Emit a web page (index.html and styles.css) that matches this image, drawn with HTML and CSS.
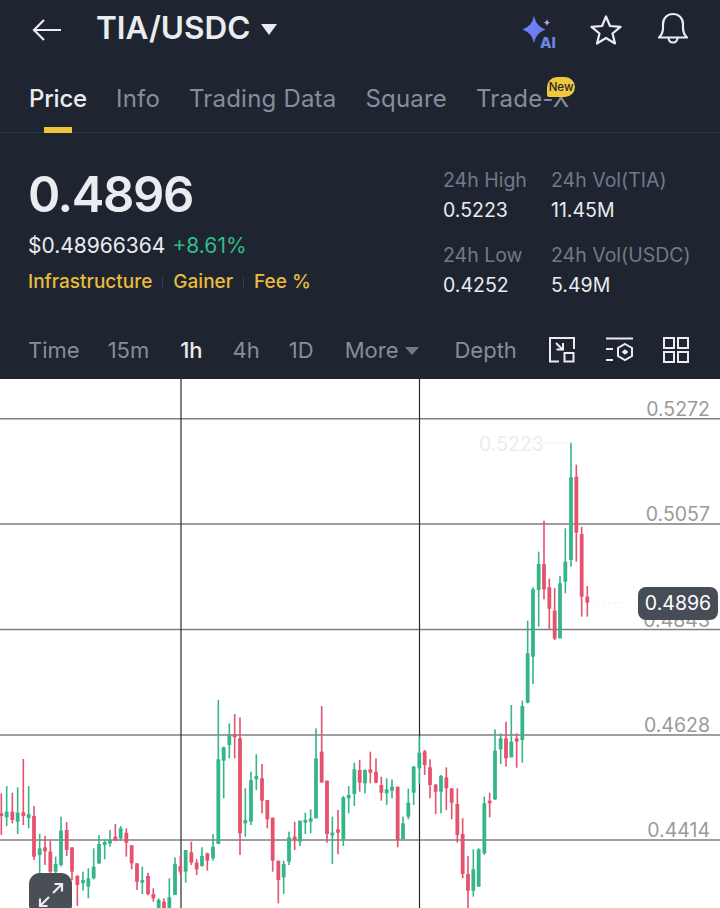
FILE: index.html
```html
<!DOCTYPE html>
<html lang="en">
<head>
<meta charset="utf-8">
<title>TIA/USDC</title>
<link rel="stylesheet" href="styles.css">
</head>
<body>
<div class="page">
  <section class="dark">
    <header class="topbar">
      <svg class="back" width="30" height="24" viewBox="0 0 30 24"><path d="M29 12H2M12 2 2 12l10 10" fill="none" stroke="#eaecef" stroke-width="2.2"/></svg>
      <h1 class="pair">TIA/USDC</h1>
      <span class="caret-big"></span>
      <div class="top-icons">
        <span class="ai">
          <svg width="34" height="34" viewBox="0 0 34 34">
            <defs><linearGradient id="aig" x1="0" y1="0" x2="1" y2="1"><stop offset="0" stop-color="#5f8ff7"/><stop offset="1" stop-color="#7a6cf0"/></linearGradient></defs>
            <path d="M12 2.500 C13.500 9.500 16 13.500 23.500 16.500 C16 19.500 13.500 23.500 12 30.500 C10.500 23.500 8 19.500 0.500 16.500 C8 13.500 10.500 9.500 12 2.500Z" fill="url(#aig)"/>
            <path d="M25 6c.4 2.200 1.300 3.200 3.500 3.600-2.200.5-3.100 1.500-3.500 3.700-.5-2.200-1.400-3.200-3.500-3.700 2.100-.4 3-1.400 3.500-3.600Z" fill="#c79be8"/>
          </svg>
          <span class="ai-text">AI</span>
        </span>
        <svg class="star" width="34" height="34" viewBox="0 0 34 34"><path d="M17 3.500 21 13l10.500.8-8 6.700 2.500 10L17 25l-9 5.500 2.500-10-8-6.700L13 13Z" fill="none" stroke="#eaecef" stroke-width="2.200" stroke-linejoin="round"/></svg>
        <svg class="bell" width="34" height="36" viewBox="0 0 34 36"><path d="M3 26.500c3-3 4-5 4-9.500V13C7 7 11.500 3 17 3s10 4 10 10v4c0 4.500 1 6.500 4 9.500Z" fill="none" stroke="#eaecef" stroke-width="2.200" stroke-linejoin="round"/><path d="M12.500 27c0 6 9 6 9 0" fill="none" stroke="#eaecef" stroke-width="2.200"/></svg>
      </div>
    </header>

    <nav class="tabs">
      <span class="tab tab-on">Price</span>
      <span class="tab">Info</span>
      <span class="tab">Trading Data</span>
      <span class="tab">Square</span>
      <span class="tab tab-new">Trade-X<span class="new">New</span></span>
    </nav>

    <section class="stats">
      <div class="quote">
        <div class="last">0.4896</div>
        <div class="fiat"><span>$0.48966364</span><span class="up">+8.61%</span></div>
        <div class="tags"><span>Infrastructure</span><i></i><span>Gainer</span><i></i><span>Fee %</span></div>
      </div>
      <div class="figures">
        <div class="fig"><span class="lab">24h High</span><span class="val">0.5223</span></div>
        <div class="fig"><span class="lab">24h Vol(TIA)</span><span class="val">11.45M</span></div>
        <div class="fig"><span class="lab">24h Low</span><span class="val">0.4252</span></div>
        <div class="fig"><span class="lab">24h Vol(USDC)</span><span class="val">5.49M</span></div>
      </div>
    </section>

    <div class="intervals">
      <span class="iv iv-time">Time</span>
      <span class="iv iv-15">15m</span>
      <span class="iv iv-on iv-1h">1h</span>
      <span class="iv iv-4h">4h</span>
      <span class="iv iv-1d">1D</span>
      <span class="iv iv-more">More<b class="caret-small"></b></span>
      <span class="iv iv-depth">Depth</span>
      <div class="tools">
        <svg width="28" height="28" viewBox="0 0 28 28" fill="none" stroke="#eaecef" stroke-width="2"><path d="M11 25.500H2V2h24v11"/><path d="M8 7l7 7M8.500 13.500H15V7"/><rect x="16.500" y="17" width="9" height="8.500"/></svg>
        <svg width="30" height="28" viewBox="0 0 30 28" fill="none" stroke="#eaecef" stroke-width="2"><path d="M2 2.500h27M2 13h7M2 24h7"/><path d="M21 8l7 4v8l-7 4-7-4v-8Z"/><path d="M21 14.500l1.800 1.500-1.800 1.500-1.800-1.500Z" fill="#eaecef"/></svg>
        <svg width="28" height="28" viewBox="0 0 28 28" fill="none" stroke="#eaecef" stroke-width="2"><rect x="2" y="2" width="10" height="10"/><rect x="16" y="2" width="10" height="10"/><rect x="2" y="16" width="10" height="10"/><rect x="16" y="16" width="10" height="10"/></svg>
      </div>
    </div>
  </section>

  <section class="chart">
    <svg id="plot" class="plot" width="720" height="529" viewBox="0 379 720 529">
      <g class="grid-h">
        <line x1="0" x2="720" y1="418.700" y2="418.700"/>
        <line x1="0" x2="720" y1="524" y2="524"/>
        <line x1="0" x2="720" y1="629.500" y2="629.500"/>
        <line x1="0" x2="720" y1="735" y2="735"/>
        <line x1="0" x2="720" y1="840" y2="840"/>
      </g>
      <g class="grid-v">
        <line x1="181" x2="181" y1="379" y2="908"/>
        <line x1="419.500" x2="419.500" y1="379" y2="908"/>
      </g>
      <g id="candles"></g>
      <line class="hi-line" x1="543" x2="571" y1="443" y2="443"/>
      <line class="px-line" x1="596" x2="626" y1="603" y2="603"/>
      <text class="hi-label" x="479" y="451">0.5223</text>
      <g class="axis">
        <text x="710" y="416">0.5272</text>
        <text x="710" y="521">0.5057</text>
        <text x="710" y="627">0.4843</text>
        <text x="710" y="732">0.4628</text>
        <text x="710" y="837">0.4414</text>
      </g>
    </svg>
    <div class="now">0.4896</div>
    <button class="expand" type="button">
      <svg width="28" height="28" viewBox="0 0 28 28" fill="none" stroke="#eaecef" stroke-width="2.200"><path d="M16 12 25 3M17.500 3H25v7.500M12 16l-9 9M3 17.500V25h7.500"/></svg>
    </button>
  </section>
</div>
<script src="script.js"></script>
</body>
</html>
```

FILE: styles.css
```css
* { box-sizing: border-box; }
html, body { margin: 0; padding: 0; background: #fff; }
body { font-family: Inter, "Noto Sans", sans-serif; }
.page { width: 720px; height: 908px; overflow: hidden; display: flex; flex-direction: column; }

.dark { background: #1e2530; height: 379px; flex: none; display: flex; flex-direction: column; }

.topbar { height: 60px; display: flex; align-items: center; padding: 0 30px 4px 32px; flex: none; }
.back { flex: none; margin-top: 4px; }
.pair { margin: 0 0 0 34px; font-size: 31.500px; line-height: 36px; font-weight: 600; color: #eaecef; letter-spacing: 0; }
.caret-big { width: 0; height: 0; margin: 2px 0 0 11px; border-left: 8px solid transparent; border-right: 8px solid transparent; border-top: 11px solid #eaecef; }
.top-icons { margin-left: auto; display: flex; align-items: center; gap: 33px; }
.ai { position: relative; width: 34px; height: 34px; display: block; margin-top: 4px; }
.ai-text { position: absolute; left: 18px; bottom: -3px; font-size: 15px; line-height: 14px; font-weight: 800; color: #6f86e8; }
.star { margin-top: 3px; margin-right: 0; }
.bell { margin-top: 2px; }

.tabs { height: 73px; display: flex; align-items: flex-start; gap: 29px; padding: 21px 0 0 29px; border-bottom: 1px solid #2b3340; flex: none; }
.tab { position: relative; font-size: 24px; line-height: 36px; font-weight: 400; color: #848e9c; letter-spacing: 0.200px; }
.tab-on { color: #eaecef; font-weight: 500; letter-spacing: -0.200px; }
.tab-on::after { content: ""; position: absolute; left: 15px; top: 46px; width: 28px; height: 6px; background: #f0c63c; }
.new { position: absolute; left: 71px; top: -4px; width: 28px; height: 20px; border-radius: 10px 10px 10px 2px; background: #f0c63c; color: #1f2630; font-size: 11.500px; line-height: 20px; font-weight: 500; text-align: center; letter-spacing: 0; }

.stats { display: flex; justify-content: space-between; padding: 33px 0 0 28px; flex: none; height: 190px; }
.last { font-size: 49px; line-height: 58px; font-weight: 600; color: #eaecef; letter-spacing: -1.400px; }
.fiat { display: flex; gap: 7px; margin-top: 9px; font-size: 21px; line-height: 26px; color: #eaecef; }
.up { color: #2ebd85; }
.tags { display: flex; align-items: center; margin-top: 11px; font-size: 19px; line-height: 24px; font-weight: 500; color: #e8bc3c; }
.tags i { width: 1px; height: 10px; background: #3a4350; margin: 0 10px; }

.figures { display: grid; grid-template-columns: 108px 169px; grid-auto-rows: 75px; margin-top: 3px; }
.fig { display: flex; flex-direction: column; gap: 6px; margin-top: -1px; }
.lab { font-size: 19.500px; line-height: 24px; color: #707a8a; }
.val { font-size: 19.500px; line-height: 24px; color: #eaecef; }

.intervals { flex: 1; display: flex; align-items: center; padding: 0 30px 2px 28px; font-size: 22px; color: #848e9c; }
.iv { line-height: 28px; white-space: nowrap; }
.iv-on { color: #eaecef; font-weight: 500; }
.iv-15 { margin-left: 28px; }
.iv-1h { margin-left: 31px; }
.iv-4h { margin-left: 30px; }
.iv-1d { margin-left: 29px; }
.iv-more { margin-left: 31px; display: flex; align-items: center; }
.iv-depth { margin-left: 35px; }
.caret-small { width: 0; height: 0; margin: 2px 0 0 7px; border-left: 7px solid transparent; border-right: 7px solid transparent; border-top: 8px solid #707a8a; }
.tools { margin-left: auto; display: flex; align-items: center; gap: 28px; }

.chart { position: relative; flex: 1; background: #fff; overflow: hidden; }
.plot { display: block; }
.grid-h line { stroke: #7f7f7f; stroke-width: 1.600; }
.grid-v line { stroke: #2a2a2a; stroke-width: 1.200; }
.hi-line { stroke: #efefef; stroke-width: 1; }
.px-line { stroke: #efefef; stroke-width: 1; stroke-dasharray: 3 3; }
.hi-label { font-size: 19.500px; fill: #ececec; }
.axis text { font-size: 19.500px; fill: #9a9a9a; text-anchor: end; }
.now { position: absolute; left: 638px; top: 208px; width: 80px; height: 33px; border-radius: 8px; background: #474d57; color: #fff; font-size: 19.500px; line-height: 33px; text-align: center; }
.expand { position: absolute; left: 29px; top: 494px; width: 43px; height: 43px; padding: 0; border: 0; border-radius: 11px; background: #4a4f57; display: flex; align-items: center; justify-content: center; }
```

FILE: script.js
```js
// Each candle: colour, wick top, wick bottom, body top, body bottom, in the sampled units of its block.
var blocks = [
  { ox: 0, oy: 690, s: [
    ['r',4,310,435,370,378],['g',20,288,408,365,382],['r',37,308,400,365,390],['g',53,292,432,368,395],
    ['r',70,207,405,367,378],['g',86,288,415,372,384],['r',102,348,510,378,500],['g',119,432,550,475,495],
    ['r',135,438,525,472,484],['r',151,452,580,485,545],['g',167,500,560,522,545],['g',183,380,530,422,525],
    ['r',200,396,498,420,480],['r',216,472,570,472,545],['r',232,555,648,558,585],['g',249,545,602,570,580],
    ['g',265,535,625,565,590],['g',281,475,568,530,565],['g',297,435,522,462,520],['g',314,448,508,456,465],
    ['g',330,420,470,450,460],['r',346,402,452,440,452],['g',362,408,452,415,445],['r',379,415,500,428,458],
    ['r',395,465,538,466,520],['r',411,520,600,520,575],['g',427,530,612,570,578],['r',444,548,616,558,612],
    ['r',460,595,635,612,625],['g',476,625,660,630,660],['r',492,625,660,635,660],['g',508,565,660,622,660],
    ['g',525,502,615,522,615],['r',541,498,552,528,545],['g',557,480,578,480,545],['r',574,455,525,487,518],
    ['r',590,508,555,518,538],['g',606,472,530,498,528],['r',622,488,542,490,512],['g',639,432,512,470,505],
    ['g',655,30,462,208,462],['g',671,170,325,172,212],['g',688,100,205,135,165],['r',704,72,205,132,142]
  ]},
  { ox: 240, oy: 690, s: [
    ['r',0,82,495,145,430],['g',16,295,440,390,400],['g',33,245,405,270,395],['g',49,193,300,258,268],
    ['r',66,222,370,265,332],['r',82,330,415,330,388],['r',98,383,545,383,512],['r',115,512,640,512,570],
    ['g',131,512,612,522,562],['g',147,425,525,442,515],['r',164,395,480,440,450],['g',180,392,468,392,455],
    ['g',196,368,432,390,398],['g',212,358,430,385,395],['g',228,115,385,205,385],['r',245,48,275,185,278],
    ['r',261,272,458,272,432],['g',277,380,522,428,436],['r',294,360,493,418,428],['g',310,318,468,322,448],
    ['g',326,288,370,315,325],['g',343,218,348,238,312],['r',359,210,305,240,278],['g',375,238,310,240,280],
    ['r',391,185,280,238,248],['r',408,205,280,245,278],['r',424,260,332,285,308],['g',440,265,345,298,310],
    ['g',456,268,325,290,302],['r',473,290,472,290,450],['g',489,380,448,400,448],['g',505,296,388,338,380],
    ['g',521,228,345,230,308],['g',538,140,282,188,235],['r',554,180,255,184,225],['r',570,208,325,232,285],
    ['r',587,282,372,284,305],['g',603,255,370,258,305],['r',619,232,360,262,295],['r',635,295,388,295,338],
    ['r',652,295,458,342,435],['r',668,385,565,432,552],['r',684,498,660,552,602],['g',700,478,620,538,602],
    ['g',716,475,590,478,590]
  ]},
  { ox: 480, oy: 640, s: [
    ['g',13,470,645,490,640],['r',29,458,532,482,490],['g',45,268,480,332,478],['g',62,280,372,295,328],
    ['r',78,245,380,295,355],['g',94,195,352,305,352],['r',110,280,383,295,305],['g',127,182,368,198,300]
  ]},
  { ox: 460, oy: 380, s: [
    ['g',203,722,970,820,968],['g',219,622,912,628,830],['g',236,515,740,552,630],['r',252,422,658,552,628],
    ['r',268,596,748,622,686],['r',284,624,780,692,776],['g',300,588,775,610,775],['g',316,445,640,545,605],
    ['g',333,188,560,292,540],['r',349,254,545,290,458],['r',365,440,710,462,650],['r',382,618,710,650,668]
  ]}
];
var NS = 'http://www.w3.org/2000/svg';
var layer = document.getElementById('candles');
var colours = { g: '#35b58a', r: '#e5526e' };
function bar(x, y1, y2, w, fill) {
  var r = document.createElementNS(NS, 'rect');
  r.setAttribute('x', (x - w / 2).toFixed(2));
  r.setAttribute('y', y1.toFixed(2));
  r.setAttribute('width', w);
  r.setAttribute('height', Math.max(y2 - y1, 1).toFixed(2));
  r.setAttribute('fill', fill);
  layer.appendChild(r);
}
blocks.forEach(function (b) {
  b.s.forEach(function (c) {
    var x = b.ox + c[1] / 3, fill = colours[c[0]];
    bar(x, b.oy + c[2] / 3, b.oy + c[3] / 3, 1.6, fill);
    bar(x, b.oy + c[4] / 3, b.oy + c[5] / 3, 3.8, fill);
  });
});
```
